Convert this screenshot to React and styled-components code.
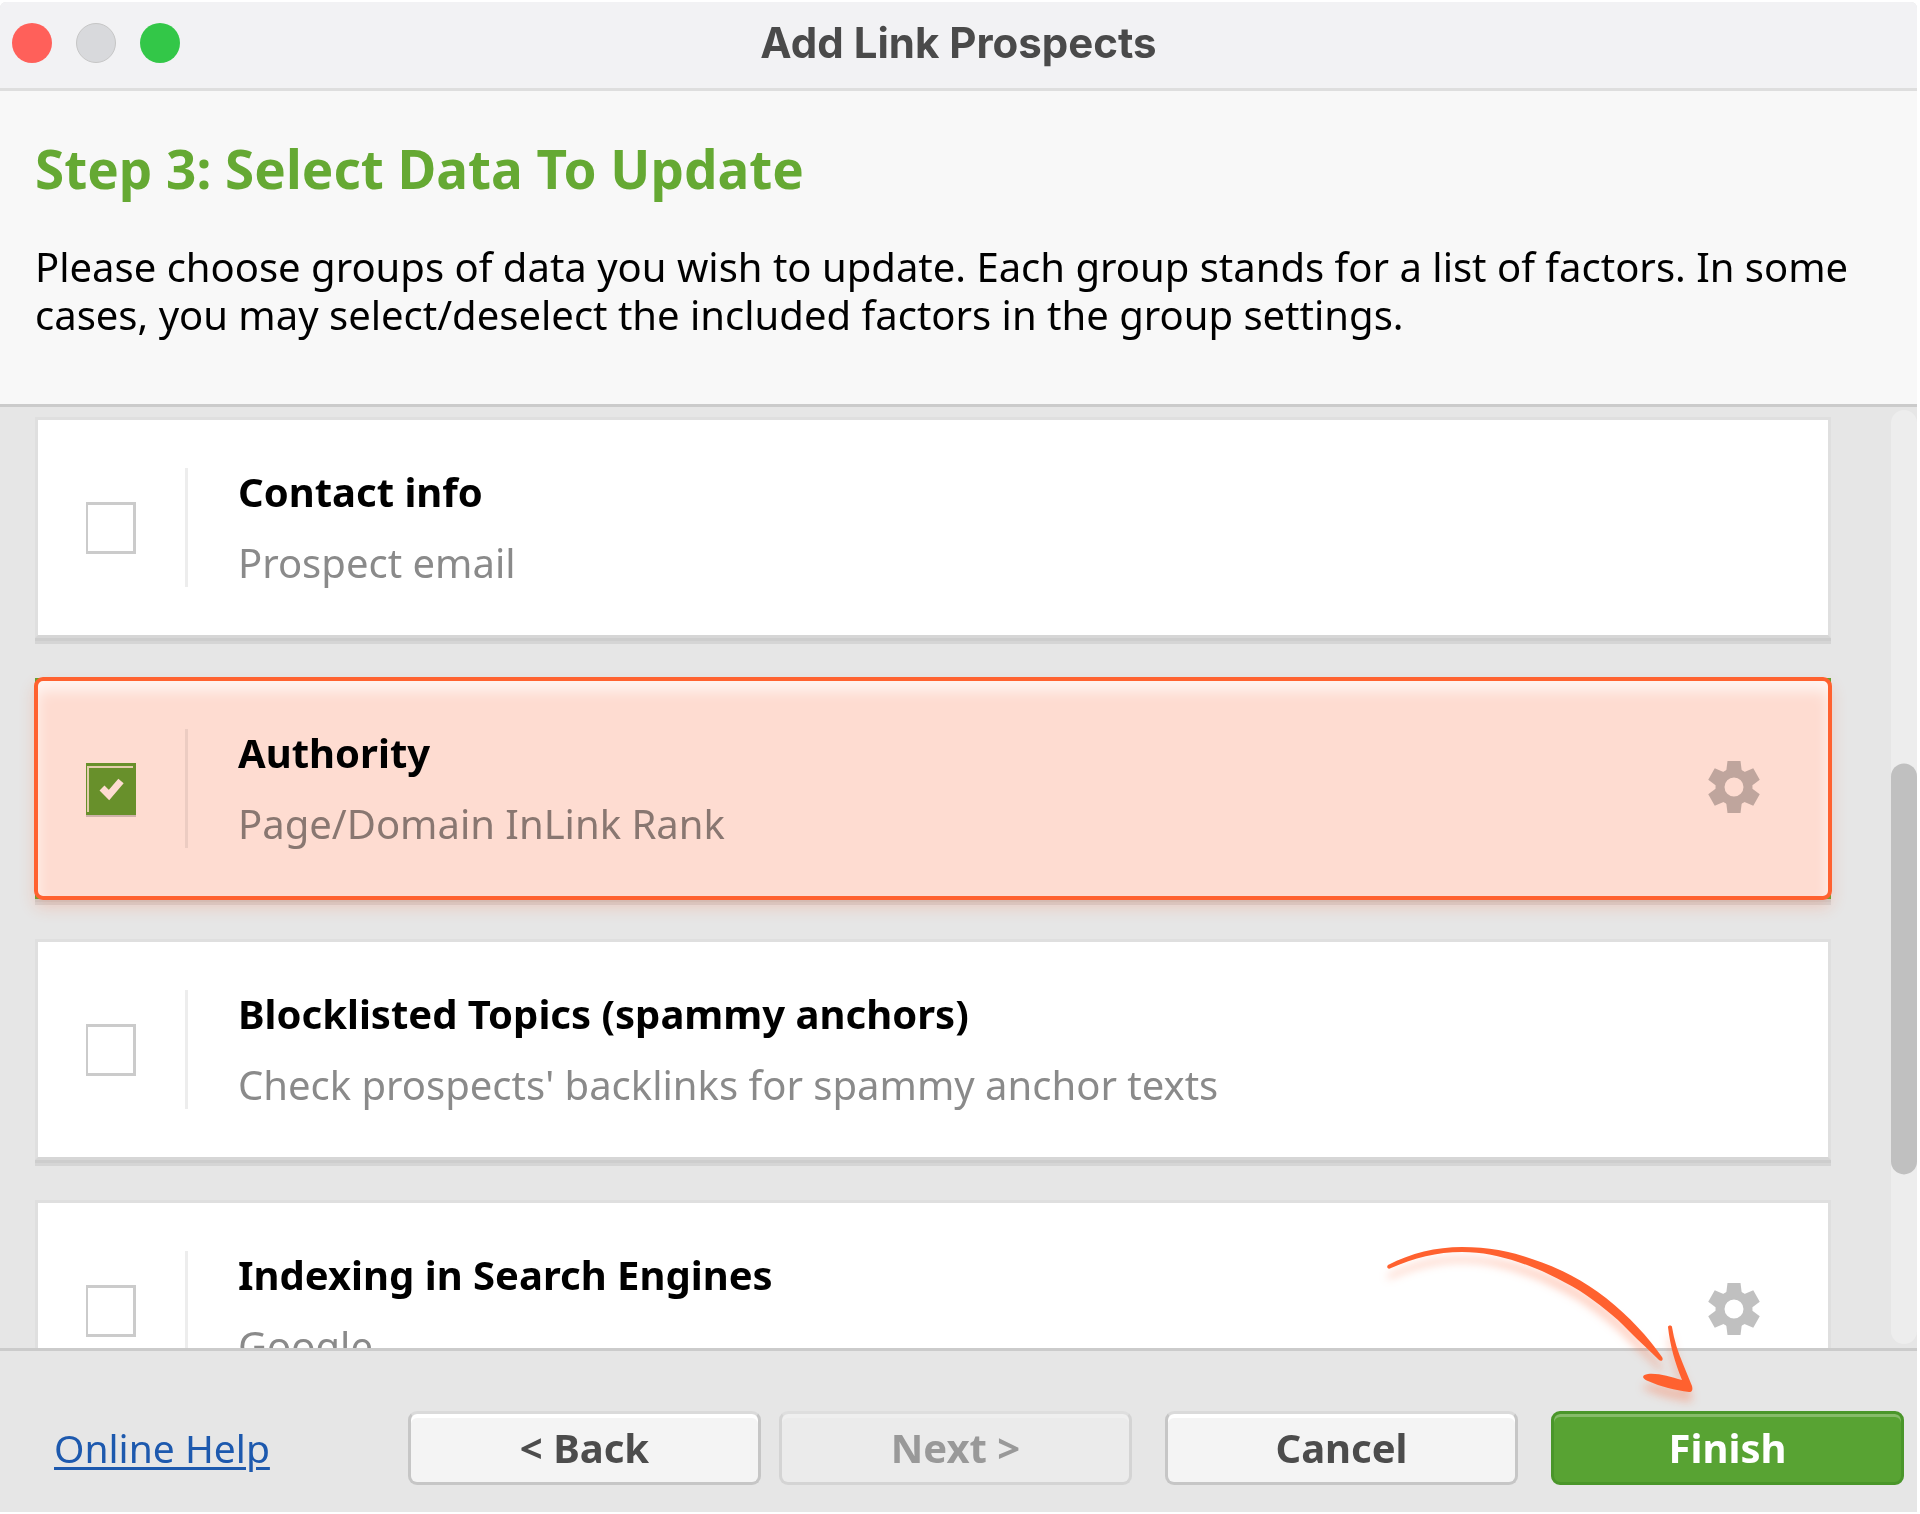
import React, { useState } from 'react';
import styled, { createGlobalStyle, css } from 'styled-components';

const GROUPS = [
  { id: 'contact', title: 'Contact info', text: 'Prospect email' },
  {
    id: 'authority',
    title: 'Authority',
    text: 'Page/Domain InLink Rank',
    settings: true,
    highlighted: true,
  },
  {
    id: 'blocklisted',
    title: 'Blocklisted Topics (spammy anchors)',
    text: "Check prospects' backlinks for spammy anchor texts",
  },
  { id: 'indexing', title: 'Indexing in Search Engines', text: 'Google', settings: true },
];

export default function App() {
  const [selected, setSelected] = useState(['authority']);

  const toggle = (id) => {
    setSelected((list) => (list.includes(id) ? list.filter((item) => item !== id) : [...list, id]));
  };

  return (
    <Page>
      <GlobalStyle />
      <Window>
        <TitleBar>
          <Lights>
            <Light $color="#ff605a" aria-label="Close" />
            <Light $color="#d8d9dc" $border="#c6c6c6" aria-label="Minimize" />
            <Light $color="#33c748" aria-label="Zoom" />
          </Lights>
          <WindowTitle>Add Link Prospects</WindowTitle>
        </TitleBar>

        <Header>
          <StepTitle>Step 3: Select Data To Update</StepTitle>
          <Description>
            Please choose groups of data you wish to update. Each group stands for a list of
            factors. In some cases, you may select/deselect the included factors in the group
            settings.
          </Description>
        </Header>

        <Body>
          <List>
            {GROUPS.map((group) => (
              <GroupCard
                key={group.id}
                group={group}
                checked={selected.includes(group.id)}
                onToggle={() => toggle(group.id)}
              />
            ))}
          </List>
          <Scrollbar>
            <Thumb />
          </Scrollbar>
        </Body>

        <Footer>
          <HelpLink href="#help">Online Help</HelpLink>
          <Buttons>
            <Pair>
              <Button type="button">&lt; Back</Button>
              <Button type="button" disabled>
                Next &gt;
              </Button>
            </Pair>
            <Button type="button">Cancel</Button>
            <Button type="button" $primary>
              Finish
            </Button>
          </Buttons>
          <Arrow />
        </Footer>
      </Window>
    </Page>
  );
}

function GroupCard({ group, checked, onToggle }) {
  return (
    <Card $checked={checked}>
      <CheckCell>
        <Checkbox id={group.id} type="checkbox" checked={checked} onChange={onToggle} />
        {checked && (
          <Tick viewBox="0 0 50 52" aria-hidden="true">
            <path d="M16 25l7 7 12-14" />
          </Tick>
        )}
      </CheckCell>
      <CardText>
        <CardTitle htmlFor={group.id}>{group.title}</CardTitle>
        <CardNote>{group.text}</CardNote>
      </CardText>
      {group.settings && (
        <SettingsButton type="button" aria-label={`${group.title} settings`}>
          <GearIcon />
        </SettingsButton>
      )}
      {group.highlighted && (
        <>
          <Tint />
          <Highlight />
        </>
      )}
    </Card>
  );
}

function GearIcon() {
  return (
    <svg width="52" height="52" viewBox="-26 -26 52 52" aria-hidden="true">
      <circle r="14" fill="none" stroke="#c0c0c0" strokeWidth="9" />
      {[0, 60, 120, 180, 240, 300].map((angle) => (
        <path key={angle} d="M-8 -14L-6.5 -26H6.5L8 -14z" fill="#c0c0c0" transform={`rotate(${angle})`} />
      ))}
    </svg>
  );
}

function Arrow() {
  return (
    <ArrowSvg width="320" height="180" viewBox="0 0 320 180" aria-hidden="true">
      <path d="M8 26C31 14 56 8 82 8C108 8 130 12 152 20C180 29 204 42 226 59C250 78 268 98 282 118C284 121 281 123 279 121C270 112 260 103 249 92C235 77 218 64 200 52C180 40 160 30 138 23C120 17 102 13 82 13C57 13 34 19 11 29C8 31 6 28 8 26z" />
      <path d="M288 88C288 86 292 86 292 88C294 101 298 113 303 125C306 132 309 140 312 147C313 151 312 153 309 153C295 151 281 148 268 142C261 139 262 136 268 135C279 134 290 138 302 141C295 124 290 106 288 88z" />
    </ArrowSvg>
  );
}

const GlobalStyle = createGlobalStyle`
  * {
    box-sizing: border-box;
  }
  body {
    margin: 0;
    background: #fff;
    font-family: 'Noto Sans', 'Open Sans', sans-serif;
    font-size: 40px;
    color: #000;
  }
`;

const Page = styled.div`
  height: 100vh;
  padding: 2px 3px 2px 0;
`;

const Window = styled.div`
  display: flex;
  flex-direction: column;
  height: 100%;
  border-radius: 6px 6px 0 0;
  background: #e6e6e6;
  overflow: hidden;
`;

const TitleBar = styled.div`
  display: grid;
  grid-template-columns: 1fr auto 1fr;
  align-items: center;
  flex: none;
  height: 89px;
  padding: 0 12px 4px;
  border-bottom: 3px solid #dedede;
  background: #f2f2f4;
`;

const Lights = styled.div`
  display: flex;
  gap: 24px;
`;

const Light = styled.button`
  width: 40px;
  height: 40px;
  padding: 0;
  border: 1px solid ${(props) => props.$border || 'transparent'};
  border-radius: 50%;
  background: ${(props) => props.$color};
  background-clip: border-box;
`;

const WindowTitle = styled.div`
  font-family: Inter, sans-serif;
  font-size: 42px;
  line-height: 48px;
  font-weight: 700;
  color: #4a4a4a;
`;

const Header = styled.div`
  flex: none;
  padding: 46px 64px 65px 35px;
  border-bottom: 3px solid #cbcbcb;
  background: #f8f8f8;
`;

const StepTitle = styled.h1`
  margin: 0 0 42px;
  font-size: 53px;
  line-height: 64px;
  font-weight: 700;
  color: #65a933;
`;

const Description = styled.p`
  margin: 0;
  line-height: 48px;
`;

const Body = styled.div`
  display: flex;
  flex: 1;
  min-height: 0;
  overflow: hidden;
`;

const List = styled.div`
  display: flex;
  flex: 1;
  flex-direction: column;
  gap: 40px;
  padding: 10px 60px 0 35px;
`;

const Card = styled.div`
  position: relative;
  display: flex;
  align-items: center;
  flex: none;
  height: 221px;
  padding: 0 68px 0 48px;
  border: 3px solid #dfdfdf;
  border-bottom-color: #d6d6d6;
  background: #fff;
  box-shadow: 0 3px 0 #cdcdcd, 0 6px 0 #d5d5d5;

  ${(props) =>
    props.$checked &&
    css`
      border-color: #67a22e;
    `}
`;

const CheckCell = styled.div`
  display: grid;
  width: 102px;
  height: 119px;
  align-items: center;
  border-right: 3px solid #ededed;
`;

const Checkbox = styled.input`
  grid-area: 1 / 1;
  appearance: none;
  width: 50px;
  height: 52px;
  margin: 0;
  border: 3px solid #cbcbcb;
  border-left-width: 2px;
  background: #fff;

  &:checked {
    border: 3px solid #68a734;
    border-left-width: 1px;
    background: #68a734;
    box-shadow: inset 2px 2px 0 #e4efd2, 0 2px 0 #cfcfcf;
  }
`;

const Tick = styled.svg`
  grid-area: 1 / 1;
  width: 50px;
  height: 52px;
  pointer-events: none;

  path {
    fill: none;
    stroke: #fff;
    stroke-width: 7;
  }
`;

const CardText = styled.div`
  display: flex;
  flex: 1;
  flex-direction: column;
  align-items: flex-start;
  gap: 23px;
  padding-left: 50px;
  line-height: 48px;
`;

const CardTitle = styled.label`
  font-weight: 700;
`;

const CardNote = styled.div`
  color: #8a8a8a;
`;

const SettingsButton = styled.button`
  display: flex;
  padding: 0 0 4px;
  border: 0;
  background: none;
`;

const Tint = styled.div`
  position: absolute;
  inset: 0;
  background: #fedcd1;
  mix-blend-mode: multiply;
  pointer-events: none;
`;

const Highlight = styled.div`
  position: absolute;
  inset: -4px;
  border: 4px solid #ff612f;
  border-radius: 9px;
  box-shadow: inset 0 10px 14px rgba(255, 255, 255, 0.7), 0 8px 16px rgba(255, 96, 46, 0.2);
  pointer-events: none;
`;

const Scrollbar = styled.div`
  width: 26px;
  margin: 3px 0 4px;
  border-radius: 13px;
  background: #ededed;
`;

const Thumb = styled.div`
  height: 44%;
  border-radius: 13px;
  background: #c0c0c0;
  transform: translateY(86%);
`;

const Footer = styled.div`
  position: relative;
  display: flex;
  align-items: center;
  justify-content: space-between;
  flex: none;
  height: 164px;
  padding: 32px 13px 0 54px;
  border-top: 3px solid #cbcbcb;
`;

const HelpLink = styled.a`
  font-size: 39px;
  line-height: 48px;
  color: #1d59ae;
  text-decoration-thickness: 3px;
  text-underline-offset: 4px;
`;

const Buttons = styled.div`
  display: flex;
  gap: 33px;
`;

const Pair = styled.div`
  display: flex;
  gap: 18px;
`;

const Button = styled.button`
  width: 353px;
  height: 74px;
  padding: 0;
  border: 3px solid #c6c6c6;
  border-top-color: #dadada;
  border-radius: 9px;
  background: #f4f4f4;
  box-shadow: inset 0 4px 0 #fff;
  font: inherit;
  font-weight: 700;
  line-height: 48px;
  color: #4c4c4c;

  &:disabled {
    border-color: #d4d4d4;
    border-top-color: #dedede;
    background: #ebebeb;
    box-shadow: inset 0 4px 0 #efefef;
    color: #999;
  }

  ${(props) =>
    props.$primary &&
    css`
      border-color: #4a962a;
      background: #58a333;
      box-shadow: inset 0 3px 0 #86bb69;
      color: #fff;
    `}
`;

const ArrowSvg = styled.svg`
  position: absolute;
  right: 217px;
  bottom: 93px;
  fill: #ff612f;
  filter: drop-shadow(0 10px 4px rgba(255, 96, 46, 0.3));
  pointer-events: none;
`;
